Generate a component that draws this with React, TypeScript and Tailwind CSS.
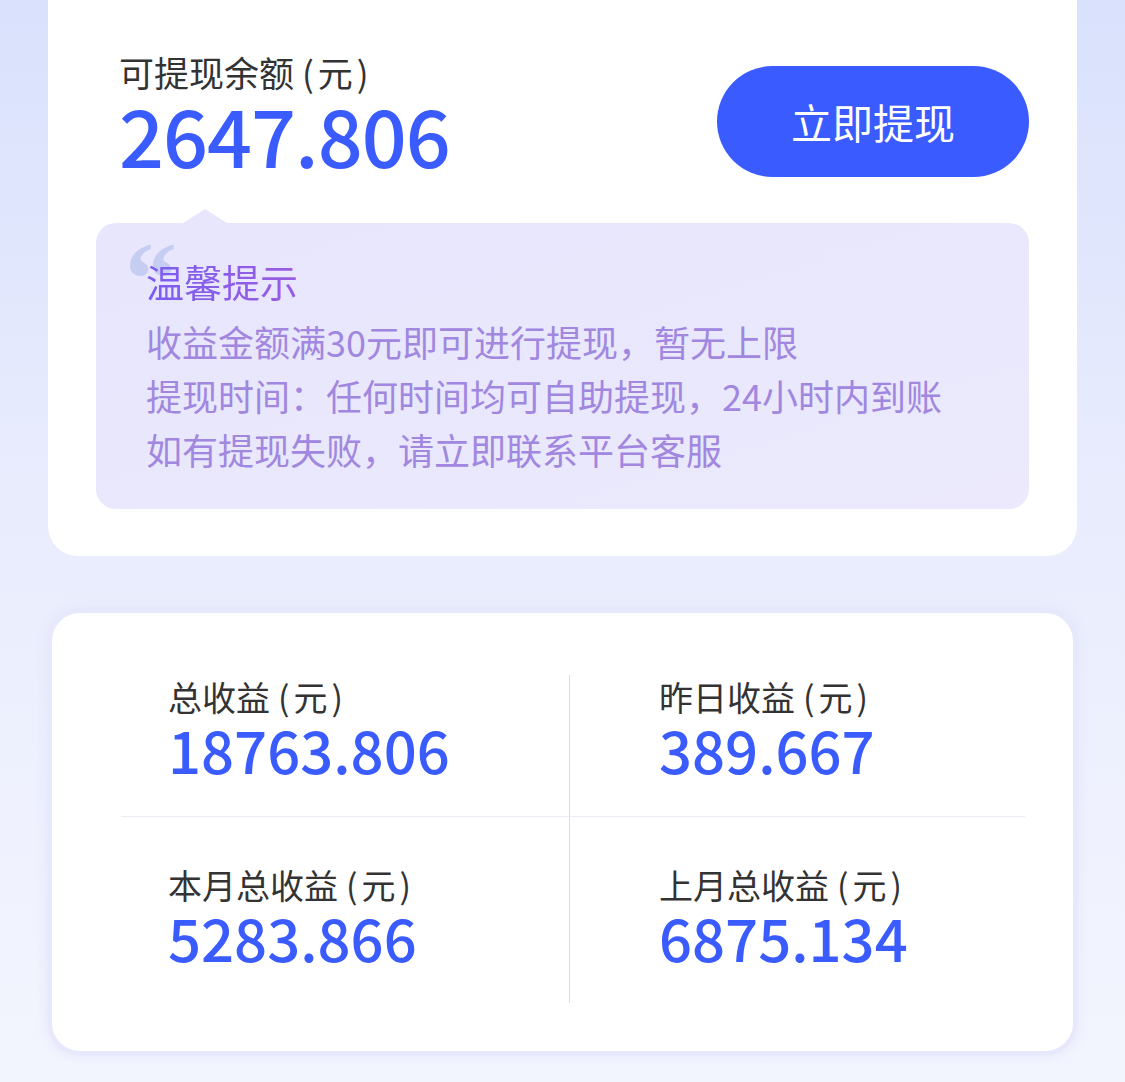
import React from 'react'

const stats = [
  { label: '总收益', value: '18763.806' },
  { label: '昨日收益', value: '389.667' },
  { label: '本月总收益', value: '5283.866' },
  { label: '上月总收益', value: '6875.134' },
]

const tips = [
  '收益金额满30元即可进行提现，暂无上限',
  '提现时间：任何时间均可自助提现，24小时内到账',
  '如有提现失败，请立即联系平台客服',
]

function Unit() {
  return <span className="ml-[8px] tracking-[4px]">(元)</span>
}

function BalanceCard() {
  return (
    <div className="rounded-b-[30px] bg-white px-[48px] pt-[52px] pb-[47px]">
      <div className="flex items-start justify-between">
        <div className="pl-[23px]">
          <p className="text-[35px] leading-[40px] text-[#333333]">
            可提现余额
            <Unit />
          </p>
          <p className="text-[79px] leading-[84px] font-medium tracking-[-1px] text-[#3a5bfd]">
            2647.806
          </p>
        </div>
        <button className="mt-[14px] flex h-[111px] w-[312px] items-center justify-center rounded-full bg-[#3a5bff] text-[41px] text-white">
          立即提现
        </button>
      </div>

      <div className="relative mt-[46px] rounded-[20px] bg-gradient-to-br from-[#e8e6fd] to-[#ebe9fb] pt-[33px] pb-[33px] pl-[50px]">
        <div className="absolute -top-[14px] left-[87px] h-0 w-0 border-x-[22px] border-b-[14px] border-x-transparent border-b-[#e8e6fd]" />
        <span className="absolute top-[4px] left-[29px] font-['Liberation_Serif',serif] text-[104px] leading-[104px] font-bold text-[#c6cdf2]">
          “
        </span>
        <p className="relative w-fit bg-gradient-to-r from-[#7a5df0] to-[#9a5ce2] bg-clip-text text-[38px] leading-[50px] text-transparent">
          温馨提示
        </p>
        <div className="mt-[8px]">
          {tips.map((t) => (
            <p key={t} className="text-[36px] leading-[54px] text-[#a187df]">
              {t}
            </p>
          ))}
        </div>
      </div>
    </div>
  )
}

function StatsCard() {
  return (
    <div className="mt-[53px] rounded-[32px] border-[4px] border-[#e6e8fb] bg-white pt-[62px] pr-[48px] pb-[48px] pl-[69px] shadow-[0_0_12px_rgba(220,224,250,0.8)]">
      <div className="grid grid-cols-[449px_1fr]">
        {stats.map((s, i) => (
          <div
            key={s.label}
            className={[
              i % 2 === 0 ? 'border-r border-[#dcdcee] pl-[47px]' : 'pl-[89px]',
              i < 2 ? 'border-b border-b-[#ececf4] pt-[2px] pb-[35px]' : 'pt-[48px] pb-[34px]',
            ].join(' ')}
          >
            <p className="text-[34px] leading-[40px] text-[#333333]">
              {s.label}
              <Unit />
            </p>
            <p className="text-[58px] leading-[64px] font-medium text-[#3a5bfd]">{s.value}</p>
          </div>
        ))}
      </div>
    </div>
  )
}

export default function App() {
  return (
    <div className="min-h-[1082px] w-[1125px] bg-gradient-to-b from-[#d9e1fc] via-[#eaedfd] to-[#f3f5fe] px-[48px] pb-[26px] font-['Noto_Sans_CJK_SC','Noto_Sans',sans-serif]">
      <BalanceCard />
      <StatsCard />
    </div>
  )
}
